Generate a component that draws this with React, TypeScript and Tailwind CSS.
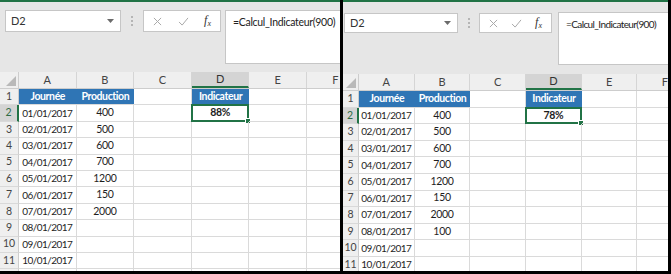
import React from 'react'

type Cfg = {
  panel: string
  bar: string
  nameBox: string
  dots: string
  fxBox: string
  gap: string
  formula: string
  rowHead: string
  col: string
  row: string
  head: string
}

const leftCfg: Cfg = {
  panel: 'w-[340px]',
  bar: 'h-[70px] pt-[8px]',
  nameBox: 'ml-[5px] w-[116px] h-[22px]',
  dots: 'w-[22px] h-[22px]',
  fxBox: 'w-[78px] h-[22px]',
  gap: 'w-[4px]',
  formula: 'w-[200px] h-[54px] pl-[7px] pt-[3px] text-[10.5px] tracking-[-0.3px]',
  rowHead: 'w-[19px]',
  col: 'w-[57.6px]',
  row: 'h-[16.4px]',
  head: 'h-[17px]',
}

const rightCfg: Cfg = {
  panel: 'w-[325px]',
  bar: 'h-[72px] pt-[10px]',
  nameBox: 'ml-[1px] mt-[1px] w-[114px] h-[20px]',
  dots: 'w-[21px] h-[22px]',
  fxBox: 'mt-[1px] w-[73px] h-[20px]',
  gap: 'w-[6px]',
  formula: 'w-[200px] h-[53px] pl-[7px] pt-[3px] text-[10px] tracking-[-0.6px]',
  rowHead: 'w-[16px]',
  col: 'w-[55.7px]',
  row: 'h-[16.6px]',
  head: 'h-[17px]',
}

const dates = [
  '01/01/2017', '02/01/2017', '03/01/2017', '04/01/2017', '05/01/2017',
  '06/01/2017', '07/01/2017', '08/01/2017', '09/01/2017', '10/01/2017',
]

const cols = ['A', 'B', 'C', 'D', 'E', 'F']

const FormulaBar = ({ cfg }: { cfg: Cfg }) => (
  <div className={`${cfg.bar} shrink-0 bg-[#e6e6e6] flex items-start`}>
    <div className={`${cfg.nameBox} shrink-0 bg-white border border-[#c6c6c6] flex items-center justify-between pl-[5px] pr-[6px] text-[11px] text-[#333] tracking-[-0.2px]`}>
      <span>D2</span>
      <svg width="7" height="4" viewBox="0 0 7 4"><path d="M0 0H7L3.5 4Z" fill="#6b6b6b" /></svg>
    </div>
    <div className={`${cfg.dots} shrink-0 flex flex-col items-center justify-center gap-[2px]`}>
      <span className="w-[2px] h-[2px] bg-[#b5b5b5]" />
      <span className="w-[2px] h-[2px] bg-[#b5b5b5]" />
      <span className="w-[2px] h-[2px] bg-[#b5b5b5]" />
    </div>
    <div className={`${cfg.fxBox} shrink-0 bg-white border border-[#c6c6c6] flex items-center justify-between px-[9px]`}>
      <svg width="9" height="9" viewBox="0 0 10 10">
        <path d="M1 1L9 9M9 1L1 9" stroke="#a8a8a8" strokeWidth="1.1" fill="none" />
      </svg>
      <svg width="11" height="9" viewBox="0 0 12 10">
        <path d="M1 5.5L4.5 9L11 1" stroke="#a8a8a8" strokeWidth="1.1" fill="none" />
      </svg>
      <span className="font-[family-name:'Liberation_Serif',serif] italic text-[12px] text-[#333] leading-none">
        f<span className="text-[8px] align-[-2px]">x</span>
      </span>
    </div>
    <div className={`${cfg.gap} shrink-0`} />
    <div className={`${cfg.formula} shrink-0 bg-white border border-[#c6c6c6] leading-[16px] text-[#222] whitespace-nowrap`}>
      =Calcul_Indicateur(900)
    </div>
  </div>
)

const Sheet = ({ cfg, value, prod }: { cfg: Cfg; value: string; prod: string[] }) => (
  <div className={`${cfg.panel} h-[271px] shrink-0 bg-white overflow-hidden flex flex-col`}>
    <div className="h-[2px] shrink-0 bg-[#217346]" />
    <FormulaBar cfg={cfg} />

    {/* column headers */}
    <div className={`${cfg.head} shrink-0 flex bg-[#efefef] border-b border-[#cdcdcd]`}>
      <div className={`${cfg.rowHead} shrink-0 border-r border-[#cdcdcd] flex items-end justify-end pr-[2px] pb-[2px]`}>
        <svg width="10" height="10" viewBox="0 0 10 10"><path d="M10 0V10H0Z" fill="#b9b9b9" /></svg>
      </div>
      {cols.map((c) => (
        <div
          key={c}
          className={`${cfg.col} shrink-0 flex items-center justify-center text-[11px] border-r border-[#d5d5d5] ${
            c === 'D' ? 'bg-[#d4d4d4] border-b-2 border-b-[#217346] text-[#333]' : 'text-[#444]'
          }`}
        >
          {c}
        </div>
      ))}
    </div>

    {/* rows */}
    {Array.from({ length: 12 }, (_, i) => i + 1).map((r) => (
      <div key={r} className={`${cfg.row} shrink-0 flex`}>
        <div
          className={`${cfg.rowHead} shrink-0 flex items-center justify-center text-[10.5px] border-b border-[#d9d9d9] ${
            r === 2
              ? 'bg-[#d4d4d4] border-r-2 border-r-[#217346] text-[#2f6b45]'
              : 'bg-[#efefef] border-r border-r-[#cdcdcd] text-[#444]'
          }`}
        >
          {r <= 11 ? r : ''}
        </div>
        {cols.map((c) => {
          if (r === 1 && (c === 'A' || c === 'B' || c === 'D')) {
            const label = c === 'A' ? 'Journée' : c === 'B' ? 'Production' : 'Indicateur'
            return (
              <div
                key={c}
                className={`${cfg.col} shrink-0 bg-[#2f75b5] border-b border-[#dadada] flex items-center justify-center text-white font-bold text-[10.5px] tracking-[-0.4px]`}
              >
                {label}
              </div>
            )
          }
          let text = ''
          if (r >= 2 && r <= 11) {
            if (c === 'A') text = dates[r - 2]
            if (c === 'B') text = prod[r - 2] ?? ''
            if (c === 'D' && r === 2) text = value
          }
          const sel = c === 'D' && r === 2
          return (
            <div
              key={c}
              className={`${cfg.col} shrink-0 relative border-r border-b border-[#dadada] flex items-center justify-center text-[#1e1e1e] ${
                c === 'A' ? 'text-[10px] tracking-[-0.55px]' : 'text-[10.5px] tracking-[-0.3px]'
              } ${sel ? 'font-bold' : ''}`}
            >
              {text}
              {sel && (
                <>
                  <div className="absolute -inset-[1px] border-2 border-[#217346]" />
                  <div className="absolute -right-[3px] -bottom-[3px] w-[6px] h-[6px] bg-[#217346] border border-white" />
                </>
              )}
            </div>
          )
        })}
      </div>
    ))}
  </div>
)

export default function App() {
  return (
    <div className="w-[671px] h-[274px] bg-black overflow-hidden flex gap-[3px] font-[family-name:Lato,sans-serif]">
      <Sheet cfg={leftCfg} value="88%" prod={['400', '500', '600', '700', '1200', '150', '2000']} />
      <Sheet cfg={rightCfg} value="78%" prod={['400', '500', '600', '700', '1200', '150', '2000', '100']} />
    </div>
  )
}
